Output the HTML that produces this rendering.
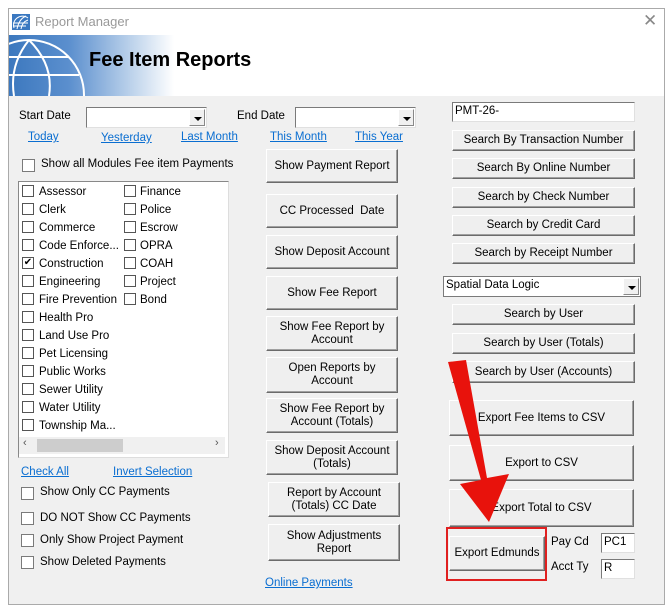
<!DOCTYPE html>
<html><head><meta charset="utf-8"><style>
*{box-sizing:border-box;margin:0;padding:0}
body{width:670px;height:607px;position:relative;background:#fff;font-family:"Liberation Sans",sans-serif;font-size:11px;color:#000;overflow:hidden}
.a{position:absolute;white-space:nowrap}
.win{position:absolute;left:8px;top:8px;width:657px;height:597px;border:1px solid #aaa;background:#f0f0f0}
.btn{position:absolute;background:#efefef;border:1px solid;border-color:#fff #6b6b6b #6b6b6b #fff;box-shadow:inset -1px -1px 0 #a0a0a0;display:flex;align-items:center;justify-content:center;text-align:center;line-height:13px;font-size:11.5px}
.lk{position:absolute;color:#0a6ed1;text-decoration:underline;white-space:nowrap;font-size:11.5px}
.cb{position:absolute;width:12px;height:12px;border:1px solid #555;background:#fff}
.cbg{position:absolute;width:13px;height:13px;border:1px solid #7a7a7a;background:#fff}
.inp{position:absolute;background:#fff;border:1px solid;border-color:#7a7a7a #e0e0e0 #e0e0e0 #7a7a7a;padding-left:2px;line-height:17px;font-size:11.5px}
.dd{position:absolute;right:1px;top:1px;width:16px;bottom:1px;background:#f0f0f0;border:1px solid;border-color:#fff #888 #888 #fff}
.dd:after{content:"";position:absolute;left:4px;top:7px;border-left:4px solid transparent;border-right:4px solid transparent;border-top:4px solid #000}
.t{font-size:11.5px}
</style></head><body>
<div class="win">
 <div class="a" style="left:0;top:0;width:655px;height:26px;background:#fff"></div>
 <svg class="a" style="left:3px;top:5px" width="18" height="16"><rect width="18" height="16" fill="#3a78c0"/><path d="M2 14 A9 9 0 0 1 16 4 M5 15 Q7 5 14 2 M9 15 Q10 8 16 6 M1 9 L16 9 M1 12 L14 12" stroke="#fff" fill="none" stroke-width="1"/></svg>
 <div class="a" style="left:26px;top:5px;color:#999;font-size:13px">Report Manager</div>
 <div class="a" style="left:634px;top:2px;color:#888;font-size:17px">✕</div>
 <div class="a" style="left:0;top:26px;width:655px;height:61px;background:linear-gradient(90deg,#3c78be 0,#5b8fce 60px,#b9d0ea 120px,#fff 165px)"></div>
 <svg class="a" style="left:0;top:26px" width="80" height="61"><g stroke="#fff" stroke-width="2" fill="none"><circle cx="20" cy="60" r="55"/><path d="M20 5 Q45 30 40 61 M20 5 Q0 30 5 61 M-30 40 L70 40 M-20 22 L60 22"/></g></svg>
 <div class="a" style="left:80px;top:40px;font-size:20px;font-weight:bold">Fee Item Reports</div>

 <div class="a t" style="left:10px;top:101px">Start Date</div>
 <div class="inp" style="left:77px;top:98px;width:121px;height:21px"><div class="dd"></div></div>
 <div class="a t" style="left:228px;top:101px">End Date</div>
 <div class="inp" style="left:286px;top:98px;width:121px;height:21px"><div class="dd"></div></div>
 <div class="lk" style="left:19px;top:122px">Today</div>
 <div class="lk" style="left:92px;top:123px">Yesterday</div>
 <div class="lk" style="left:172px;top:122px">Last Month</div>
 <div class="lk" style="left:261px;top:122px">This Month</div>
 <div class="lk" style="left:346px;top:122px">This Year</div>
 <div class="cbg" style="left:13px;top:150px"></div><div class="a t" style="left:32px;top:149px">Show all Modules Fee item Payments</div>

 <div class="a" style="left:9px;top:172px;width:211px;height:277px;background:#fff;border:1px solid;border-color:#888 #ddd #ddd #888"></div>
</div>
<div class="a" style="left:19px;top:437px;width:206px;height:17px;background:#f0f0f0"></div>
<div class="a" style="left:37px;top:439px;width:86px;height:13px;background:#cdcdcd"></div>
<div class="a" style="left:23px;top:437px;color:#555">‹</div><div class="a" style="left:215px;top:437px;color:#555">›</div>

<div class="lk" style="left:21px;top:466px">Check All</div>
<div class="lk" style="left:113px;top:466px">Invert Selection</div>
<div class="cbg" style="left:21px;top:487px"></div><div class="a t" style="left:40px;top:486px">Show Only CC Payments</div>
<div class="cbg" style="left:21px;top:512px"></div><div class="a t" style="left:40px;top:512px">DO NOT Show CC Payments</div>
<div class="cbg" style="left:21px;top:534px"></div><div class="a t" style="left:40px;top:534px">Only Show Project Payment</div>
<div class="cbg" style="left:21px;top:556px"></div><div class="a t" style="left:40px;top:556px">Show Deleted Payments</div>

<div class="btn" style="left:266px;top:149px;width:132px;height:34px">Show Payment Report</div>
<div class="btn" style="left:266px;top:194px;width:132px;height:34px">CC Processed &nbsp;Date</div>
<div class="btn" style="left:266px;top:235px;width:132px;height:34px">Show Deposit Account</div>
<div class="btn" style="left:266px;top:276px;width:132px;height:34px">Show Fee Report</div>
<div class="btn" style="left:266px;top:316px;width:132px;height:35px">Show Fee Report by<br>Account</div>
<div class="btn" style="left:266px;top:357px;width:132px;height:36px">Open Reports by<br>Account</div>
<div class="btn" style="left:266px;top:398px;width:132px;height:35px">Show Fee Report by<br>Account (Totals)</div>
<div class="btn" style="left:266px;top:440px;width:132px;height:35px">Show Deposit Account<br>(Totals)</div>
<div class="btn" style="left:268px;top:482px;width:132px;height:35px">Report by Account<br>(Totals) CC Date</div>
<div class="btn" style="left:268px;top:524px;width:132px;height:37px">Show Adjustments<br>Report</div>
<div class="lk" style="left:265px;top:577px">Online Payments</div>

<div class="inp" style="left:452px;top:102px;width:183px;height:20px">PMT-26-</div>
<div class="btn" style="left:452px;top:130px;width:183px;height:21px">Search By Transaction Number</div>
<div class="btn" style="left:452px;top:158px;width:183px;height:21px">Search By Online Number</div>
<div class="btn" style="left:452px;top:187px;width:183px;height:21px">Search by Check Number</div>
<div class="btn" style="left:452px;top:215px;width:183px;height:21px">Search by Credit Card</div>
<div class="btn" style="left:452px;top:243px;width:183px;height:21px">Search by Receipt Number</div>
<div class="inp" style="left:443px;top:276px;width:198px;height:21px;border-color:#7a7a7a">Spatial Data Logic<div class="dd"></div></div>
<div class="btn" style="left:452px;top:304px;width:183px;height:21px">Search by User</div>
<div class="btn" style="left:452px;top:333px;width:183px;height:21px">Search by User (Totals)</div>
<div class="btn" style="left:452px;top:361px;width:183px;height:22px">Search by User (Accounts)</div>
<div class="btn" style="left:449px;top:400px;width:185px;height:36px">Export Fee Items to CSV</div>
<div class="btn" style="left:449px;top:445px;width:185px;height:36px">Export to CSV</div>
<div class="btn" style="left:449px;top:489px;width:185px;height:38px">Export Total to CSV</div>
<div class="btn" style="left:449px;top:536px;width:96px;height:35px">Export Edmunds</div>
<div class="a" style="left:446px;top:527px;width:101px;height:54px;border:2px solid #e02020"></div>
<div class="a t" style="left:551px;top:536px">Pay Cd</div>
<div class="inp" style="left:601px;top:533px;width:34px;height:20px">PC1</div>
<div class="a t" style="left:551px;top:561px">Acct Ty</div>
<div class="inp" style="left:601px;top:559px;width:34px;height:20px">R</div>

<svg class="a" style="left:0;top:0" width="670" height="607"><path d="M448 362 L466 360 L487 478 L509 474 L489 522 L460 484 L481 480 Z" fill="#e8120c"/></svg>

<div class="a t" style="left:22px;top:183px;line-height:18px">
<div style="position:relative;height:18px"><span class="cb" style="top:2px"></span><span class="a" style="left:17px">Assessor</span></div>
<div style="position:relative;height:18px"><span class="cb" style="top:2px"></span><span class="a" style="left:17px">Clerk</span></div>
<div style="position:relative;height:18px"><span class="cb" style="top:2px"></span><span class="a" style="left:17px">Commerce</span></div>
<div style="position:relative;height:18px"><span class="cb" style="top:2px"></span><span class="a" style="left:17px">Code Enforce...</span></div>
<div style="position:relative;height:18px"><span class="cb" style="top:2px;font-size:10px;line-height:10px;text-align:center">✔</span><span class="a" style="left:17px">Construction</span></div>
<div style="position:relative;height:18px"><span class="cb" style="top:2px"></span><span class="a" style="left:17px">Engineering</span></div>
<div style="position:relative;height:18px"><span class="cb" style="top:2px"></span><span class="a" style="left:17px">Fire Prevention</span></div>
<div style="position:relative;height:18px"><span class="cb" style="top:2px"></span><span class="a" style="left:17px">Health Pro</span></div>
<div style="position:relative;height:18px"><span class="cb" style="top:2px"></span><span class="a" style="left:17px">Land Use Pro</span></div>
<div style="position:relative;height:18px"><span class="cb" style="top:2px"></span><span class="a" style="left:17px">Pet Licensing</span></div>
<div style="position:relative;height:18px"><span class="cb" style="top:2px"></span><span class="a" style="left:17px">Public Works</span></div>
<div style="position:relative;height:18px"><span class="cb" style="top:2px"></span><span class="a" style="left:17px">Sewer Utility</span></div>
<div style="position:relative;height:18px"><span class="cb" style="top:2px"></span><span class="a" style="left:17px">Water Utility</span></div>
<div style="position:relative;height:18px"><span class="cb" style="top:2px"></span><span class="a" style="left:17px">Township Ma...</span></div>
</div>
<div class="a t" style="left:124px;top:183px;line-height:18px;width:80px">
<div style="position:relative;height:18px"><span class="cb" style="top:2px"></span><span class="a" style="left:16px">Finance</span></div>
<div style="position:relative;height:18px"><span class="cb" style="top:2px"></span><span class="a" style="left:16px">Police</span></div>
<div style="position:relative;height:18px"><span class="cb" style="top:2px"></span><span class="a" style="left:16px">Escrow</span></div>
<div style="position:relative;height:18px"><span class="cb" style="top:2px"></span><span class="a" style="left:16px">OPRA</span></div>
<div style="position:relative;height:18px"><span class="cb" style="top:2px"></span><span class="a" style="left:16px">COAH</span></div>
<div style="position:relative;height:18px"><span class="cb" style="top:2px"></span><span class="a" style="left:16px">Project</span></div>
<div style="position:relative;height:18px"><span class="cb" style="top:2px"></span><span class="a" style="left:16px">Bond</span></div>
</div>
</body></html>
